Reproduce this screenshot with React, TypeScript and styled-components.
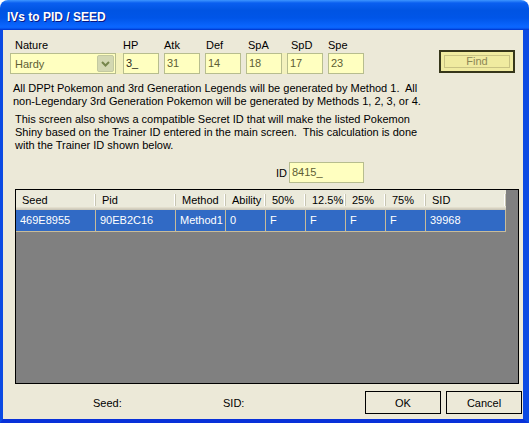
import React from "react"
import styled, { createGlobalStyle } from "styled-components"

const GlobalStyle = createGlobalStyle`
  html,
  body {
    margin: 0;
    padding: 0;
    background: #fff;
    overflow: hidden;
  }
  body {
    font-family: "Liberation Sans", Arial, sans-serif;
    font-size: 11px;
    color: #000;
  }
`

const frame = "#0B4AE3"

const Window = styled.div`
  width: 529px;
  height: 423px;
  display: flex;
  flex-direction: column;
  border-radius: 8px 8px 0 0;
  overflow: hidden;
`

const TitleBar = styled.div`
  height: 30px;
  flex: none;
  box-sizing: border-box;
  padding: 10px 0 0 7px;
  background: linear-gradient(
    180deg,
    #3d95ff 0,
    #0a5ff0 3px,
    #0054e3 10px,
    #0055e8 60%,
    #0a66ff 88%,
    #0a62f8 94%,
    #003dd7 97%,
    #003dd7 100%
  );
  color: #fff;
  font-weight: bold;
  font-size: 12px;
  line-height: 14px;
  text-shadow: 1px 1px #0a1883;
`

const Body = styled.div`
  flex: 1;
  display: flex;
  flex-direction: column;
  box-sizing: border-box;
  background: #ece9d8;
  border-left: 3px solid ${frame};
  border-right: 6px solid ${frame};
  border-bottom: 4px solid #0831d9;
  padding: 9px 0 0 7px;
`

const FieldsRow = styled.div`
  display: flex;
  align-items: flex-start;
`

const Field = styled.div`
  display: flex;
  flex-direction: column;
  gap: 1px;
`

const Label = styled.span<{ $offset?: number }>`
  height: 13px;
  line-height: 13px;
  padding-left: ${(p) => p.$offset ?? 0}px;
  white-space: nowrap;
`

const Spacer = styled.div<{ $w: number; $tinted?: boolean }>`
  width: ${(p) => p.$w}px;
  height: 21px;
  margin-top: 14px;
  background: ${(p) => (p.$tinted ? "#f3f1bd" : "transparent")};
`

const TextBox = styled.div<{ $w: number; $dark?: boolean }>`
  width: ${(p) => p.$w}px;
  height: 21px;
  box-sizing: border-box;
  border: 1px solid #b7bd8e;
  background: #ffffc0;
  padding: 0 2px;
  line-height: 19px;
  color: ${(p) => (p.$dark ? "#2a2a1a" : "#5e5e34")};
  white-space: nowrap;
`

const Combo = styled.div`
  width: 106px;
  height: 21px;
  box-sizing: border-box;
  border: 1px solid #b7bd8e;
  background: #ffffc0;
  display: flex;
  align-items: center;
  padding: 0 1px 0 4px;
  color: #5e5e34;
`

const ComboText = styled.span`
  flex: 1;
`

const DropButton = styled.span`
  width: 17px;
  height: 17px;
  box-sizing: border-box;
  border: 1px solid #c3c9a0;
  border-radius: 2px;
  background: #d3d8b2;
  display: flex;
  align-items: center;
  justify-content: center;
`

const FindButton = styled.button`
  margin: 11px 0 0 75px;
  width: 76px;
  height: 23px;
  box-sizing: border-box;
  border: 2px solid #36361a;
  background: #f0eba0;
  padding: 3px;
  display: flex;
  font: inherit;
`

const FindInner = styled.span`
  flex: 1;
  border: 1px solid #c9c383;
  line-height: 11px;
  color: #8c8756;
  text-align: center;
`

const Note = styled.p<{ $indent: number; $top: number }>`
  margin: ${(p) => p.$top}px 0 0 ${(p) => p.$indent}px;
  line-height: 13px;
  white-space: pre;
`

const IdRow = styled.div`
  display: flex;
  align-items: center;
  margin: 10px 0 0 266px;
`

const IdLabel = styled.span`
  width: 13px;
`

const ListView = styled.div`
  margin: 6px 0 0 5px;
  width: 504px;
  height: 195px;
  box-sizing: border-box;
  border: 1px solid #000;
  background: #808080;
`

const Grid = styled.table`
  border-collapse: separate;
  border-spacing: 0;
  table-layout: fixed;
  width: 490px;
`

const HeadCell = styled.th`
  position: relative;
  height: 20px;
  box-sizing: border-box;
  padding: 0 0 0 6px;
  text-align: left;
  font-weight: normal;
  white-space: nowrap;
  overflow: hidden;
  background: linear-gradient(
    180deg,
    #ebeadb 0,
    #ebeadb 17px,
    #e2decd 17px,
    #e2decd 18px,
    #d6d2c2 18px,
    #d6d2c2 19px,
    #cbc7b8 19px
  );

  &::after {
    content: "";
    position: absolute;
    right: 0;
    top: 4px;
    bottom: 4px;
    width: 1px;
    background: #c7c5b2;
    box-shadow: -1px 0 #fff;
  }
`

const Cell = styled.td`
  height: 22px;
  box-sizing: border-box;
  padding: 0 0 0 4px;
  line-height: 21px;
  background: #316ac5;
  color: #fff;
  border-right: 1px solid #c8bc99;
  border-bottom: 1px solid #c8bc99;
  white-space: nowrap;
  overflow: hidden;
`

const Footer = styled.div`
  display: flex;
  align-items: center;
  margin-top: 7px;
  padding-left: 83px;
`

const FooterLabel = styled.span<{ $w: number }>`
  width: ${(p) => p.$w}px;
`

const Button = styled.button`
  width: 76px;
  height: 23px;
  box-sizing: border-box;
  border: 1px solid #000;
  background: #ece9d8;
  font: inherit;
  color: #000;
  padding: 0;

  & + & {
    margin-left: 5px;
  }
`

const stats = [
  { label: "HP", value: "3_", offset: 0, gap: 7, tinted: true },
  { label: "Atk", value: "31", offset: 0, gap: 5 },
  { label: "Def", value: "14", offset: 1, gap: 5 },
  { label: "SpA", value: "18", offset: 2, gap: 5 },
  { label: "SpD", value: "17", offset: 4, gap: 5, tinted: true },
  { label: "Spe", value: "23", offset: 0, gap: 5 },
]

const columns = [
  { name: "Seed", width: 80 },
  { name: "Pid", width: 80 },
  { name: "Method", width: 50 },
  { name: "Ability", width: 40 },
  { name: "50%", width: 40 },
  { name: "12.5%", width: 40 },
  { name: "25%", width: 40 },
  { name: "75%", width: 40 },
  { name: "SID", width: 80 },
]

const rows = [["469E8955", "90EB2C16", "Method1", "0", "F", "F", "F", "F", "39968"]]

const Chevron = () => (
  <svg width="9" height="6" viewBox="0 0 9 6">
    <path d="M1 1 L4.5 4.5 L8 1" fill="none" stroke="#76864c" strokeWidth="2" />
  </svg>
)

export default function App() {
  return (
    <>
      <GlobalStyle />
      <Window>
        <TitleBar>IVs to PID / SEED</TitleBar>
        <Body>
          <FieldsRow>
            <Field>
              <Label $offset={5}>Nature</Label>
              <Combo>
                <ComboText>Hardy</ComboText>
                <DropButton>
                  <Chevron />
                </DropButton>
              </Combo>
            </Field>
            {stats.map((s) => (
              <React.Fragment key={s.label}>
                <Spacer $w={s.gap} $tinted={s.tinted} />
                <Field>
                  <Label $offset={s.offset}>{s.label}</Label>
                  <TextBox $w={36} $dark={s.value === "3_"}>
                    {s.value}
                  </TextBox>
                </Field>
              </React.Fragment>
            ))}
            <FindButton>
              <FindInner>Find</FindInner>
            </FindButton>
          </FieldsRow>

          <Note $indent={3} $top={8}>
            {"All DPPt Pokemon and 3rd Generation Legends will be generated by Method 1.  All\nnon-Legendary 3rd Generation Pokemon will be generated by Methods 1, 2, 3, or 4."}
          </Note>
          <Note $indent={5} $top={5}>
            {"This screen also shows a compatible Secret ID that will make the listed Pokemon\nShiny based on the Trainer ID entered in the main screen.  This calculation is done\nwith the Trainer ID shown below."}
          </Note>

          <IdRow>
            <IdLabel>ID</IdLabel>
            <TextBox $w={75}>8415_</TextBox>
          </IdRow>

          <ListView>
            <Grid>
              <colgroup>
                {columns.map((c) => (
                  <col key={c.name} style={{ width: c.width }} />
                ))}
              </colgroup>
              <thead>
                <tr>
                  {columns.map((c) => (
                    <HeadCell key={c.name}>{c.name}</HeadCell>
                  ))}
                </tr>
              </thead>
              <tbody>
                {rows.map((row, i) => (
                  <tr key={i}>
                    {row.map((v, j) => (
                      <Cell key={j}>{v}</Cell>
                    ))}
                  </tr>
                ))}
              </tbody>
            </Grid>
          </ListView>

          <Footer>
            <FooterLabel $w={130}>Seed:</FooterLabel>
            <FooterLabel $w={142}>SID:</FooterLabel>
            <Button>OK</Button>
            <Button>Cancel</Button>
          </Footer>
        </Body>
      </Window>
    </>
  )
}
